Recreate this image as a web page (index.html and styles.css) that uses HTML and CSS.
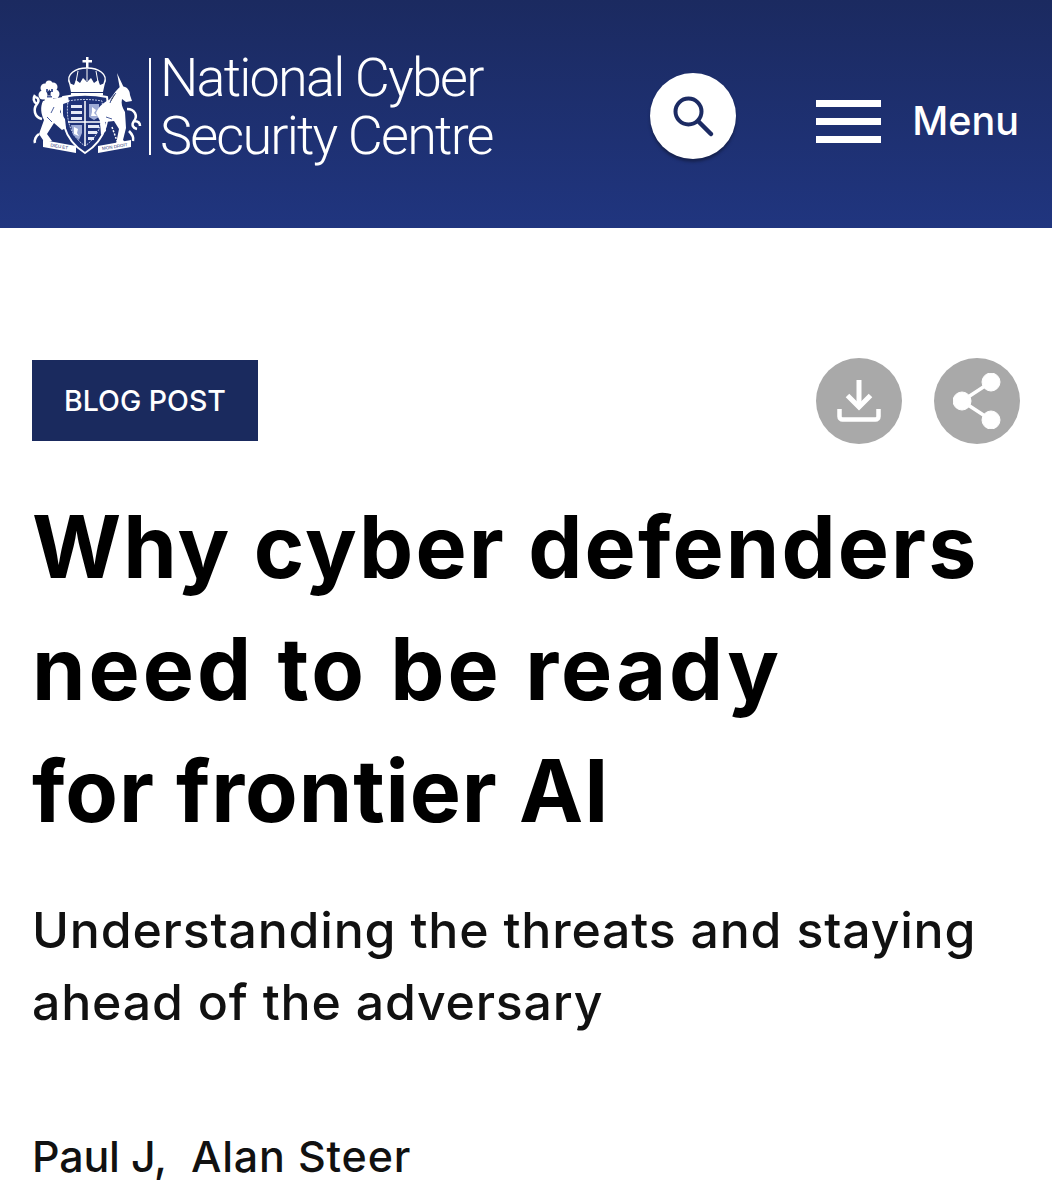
FILE: index.html
```html
<!DOCTYPE html>
<html lang="en">
<head>
    <meta charset="UTF-8">
    <meta name="viewport" content="width=device-width, initial-scale=1.0">
    <title>Why cyber defenders need to be ready for frontier AI</title>
    <link rel="stylesheet" href="styles.css">
</head>
<body>
    <header class="site-header">
        <a class="logo" href="#">
            <svg class="crest" viewBox="0 0 110 98" aria-hidden="true">
                <!-- crown -->
                <path d="M54 0h2.500v3H60v2.500h-3.500V11H54V5.500h-3.500V3H54z" fill="#fff"/>
                <path d="M38 27C33 17 44 11 55 11s22 6 17 16" fill="none" stroke="#fff" stroke-width="1.500"/>
                <path d="M55 12v12M46 14l-2 11M64 14l2 11" stroke="#fff" stroke-width="1"/>
                <path d="M39 35l-2-9 5 2 2-5 4 3 3-5 4 4 4-4 3 5 4-3 2 5 5-2-2 9z" fill="#fff"/>
                <rect x="39" y="36" width="32" height="2.500" fill="#fff"/>
                <!-- garter and shield -->
                <g transform="translate(-2 0)">
                    <path d="M33 40c14-3 30-3 44 0 3 18 1 42-22 56-23-14-25-38-22-56z" fill="#1f3278" stroke="#fff" stroke-width="2"/>
                    <path d="M38 44c11-2 23-2 34 0 2 15 0 33-17 45-17-12-19-30-17-45z" fill="none" stroke="#c3cce8" stroke-width="1" stroke-dasharray="2 1"/>
                    <path d="M55 44v45M38 65h34" stroke="#fff" stroke-width="1.500"/>
                    <path d="M41 48h11v3H41zM41 54h11v3H41zM41 60h11v3H41zM58 68h11v3H58zM58 74h9v3h-9zM58 80h6v3h-6z" fill="#e6eaf7"/>
                    <path d="M59 47h10v13l-5 3-5-3zM41 68h11v8l-3 7-6-5z" fill="#9facd6"/>
                    <path d="M62 50l4 3-2 3 3 3h-6l1-4zM44 70l4 2-1 4 2 3-5-2z" fill="#fff"/>
                </g>
                <!-- lion -->
                <circle cx="13" cy="31" r="4.500" fill="#fff"/>
                <circle cx="21" cy="30" r="4.500" fill="#fff"/>
                <circle cx="11" cy="38" r="4.500" fill="#fff"/>
                <circle cx="23" cy="37" r="4.500" fill="#fff"/>
                <circle cx="17" cy="27" r="3.500" fill="#fff"/>
                <circle cx="17" cy="43" r="4.500" fill="#fff"/>
                <path d="M14 32h2v3h-2zM19 32h2v3h-2zM15 39h5v1.500h-5z" fill="#4a5d9c"/>
                <path d="M11 44c-3 6-2 13 1 19l-5 14 6 9 7-2-5-7 7-11 8 7 4-2-1-9-5-7 3-8 6-2-1-6-11 2z" fill="#fff"/>
                <path d="M15 60l5 5M22 50l-3 6" stroke="#4a5d9c" stroke-width="1"/>
                <path d="M10 62C2 60 1 52 5 47c3-4 1-7-3-7M5 47c-4-2-4-6-2-9M7 77c-3 2-5 6-4 9" fill="none" stroke="#fff" stroke-width="2.500"/>
                <!-- unicorn -->
                <path d="M85 16l7 15-4 1z" fill="#fff"/>
                <path d="M88 30c6-2 10 3 10 8l2 6-6 1-4-3c-1 5 0 8 3 13l1 16-3 12 4 4H84l3-15-5-8-9 1 1 9-5 4-1-14-4-8c3-7 8-11 13-13 4-4 6-9 11-13z" fill="#fff"/>
                <path d="M84 36c-3 3-5 6-6 10M74 60l6 2" stroke="#4a5d9c" stroke-width="1"/>
                <path d="M95 52c8 0 11 7 7 12-3 4-1 7 3 8M102 64c4 0 6 2 6 5M97 74c3 3 5 6 4 10" fill="none" stroke="#fff" stroke-width="2.500"/>
                <path d="M80 70l5 14" stroke="#fff" stroke-width="1.500" stroke-dasharray="2 1.500"/>
                <!-- motto ribbons -->
                <path d="M11 83l33 6v7l-33-6z" fill="#fff"/>
                <path d="M66 89l33-6v7l-33 6z" fill="#fff"/>
                <text class="motto" x="27" y="91" transform="rotate(9 27 91)">DIEU ET</text>
                <text class="motto" x="83" y="91" transform="rotate(-9 83 91)">MON DROIT</text>
            </svg>
            <span class="logo-rule"></span>
            <span class="logo-name">National Cyber<br>Security Centre</span>
        </a>
        <button class="search-btn" aria-label="Search">
            <svg viewBox="0 0 44 44" width="44" height="44" fill="none" stroke="#1c2b63" aria-hidden="true">
                <circle cx="17.500" cy="17.500" r="13" stroke-width="4"/>
                <path d="M27.500 27.500L40 40" stroke-width="4.500" stroke-linecap="round"/>
            </svg>
        </button>
        <a class="menu-link" href="#">
            <span class="burger"><i></i><i></i><i></i></span>
            <span>Menu</span>
        </a>
    </header>

    <main class="article-head">
        <div class="tag-row">
            <span class="tag">BLOG POST</span>
            <div class="actions">
                <a class="round-btn" href="#" aria-label="Download">
                    <svg viewBox="0 0 44 44" width="44" height="44" fill="none" stroke="#fff" stroke-width="5" aria-hidden="true">
                        <path d="M22 1v25"/>
                        <path d="M10.500 16.500L22 28l11.500-11.500"/>
                        <path d="M2.500 30v7.500a3 3 0 0 0 3 3h33a3 3 0 0 0 3-3V30" stroke-width="4.500"/>
                    </svg>
                </a>
                <a class="round-btn" href="#" aria-label="Share">
                    <svg viewBox="0 0 48 56" width="48" height="56" fill="#fff" stroke="#fff" aria-hidden="true">
                        <circle cx="9" cy="28" r="9"/>
                        <circle cx="38" cy="9" r="9"/>
                        <circle cx="38" cy="47" r="9"/>
                        <path d="M9 28L38 9M9 28l29 19" stroke-width="3.500"/>
                    </svg>
                </a>
            </div>
        </div>
        <h1>
            <span class="line">Why cyber defenders</span>
            <span class="line line-wide">need to be ready</span>
            <span class="line line-tight">for frontier AI</span>
        </h1>
        <p class="summary">Understanding the threats and staying ahead of the adversary</p>
        <p class="authors"><span>Paul J,</span><span class="author-wide">Alan Steer</span></p>
    </main>
</body>
</html>
```

FILE: styles.css
```css
body {
    margin: 0;
    padding: 0;
    background-color: #fff;
    color: #0b0c0c;
    font-family: Inter, "Noto Sans", Arial, sans-serif;
    height: 1200px;
    overflow: hidden;
}

.site-header {
    display: flex;
    align-items: center;
    height: 228px;
    box-sizing: border-box;
    padding: 0 33px 0 32px;
    background: linear-gradient(#1b2a60, #20357f);
}
.logo {
    display: flex;
    align-items: center;
    color: #fff;
    text-decoration: none;
    margin-right: auto;
    margin-bottom: 16px;
}
.crest {
    width: 110px;
    height: 98px;
}
.motto {
    font-family: "Liberation Sans", Arial, sans-serif;
    font-size: 4.500px;
    text-anchor: middle;
    fill: #1f3278;
}
.logo-rule {
    width: 2px;
    height: 97px;
    margin: 0 9px 0 7px;
    background-color: #fff;
}
.logo-name {
    padding-top: 2px;
    font-family: Roboto, "Liberation Sans", Arial, sans-serif;
    font-weight: 300;
    font-size: 54px;
    line-height: 58px;
    letter-spacing: -1.800px;
    white-space: nowrap;
}
.search-btn {
    display: flex;
    align-items: center;
    justify-content: center;
    width: 86px;
    height: 86px;
    margin-top: 4px;
    margin-right: 80px;
    padding: 0;
    border: 0;
    border-radius: 50%;
    background-color: #fff;
    box-shadow: 0 3px 3px #16224f;
}
.menu-link {
    display: flex;
    align-items: center;
    gap: 31px;
    margin-top: 14px;
    color: #fff;
    text-decoration: none;
    font-size: 39.500px;
    font-weight: 500;
}
.burger {
    display: flex;
    flex-direction: column;
    gap: 11px;
    width: 65px;
}
.burger i {
    display: block;
    height: 7px;
    background-color: #fff;
}

.article-head {
    padding: 129px 32px 0;
}
.tag-row {
    display: flex;
    align-items: center;
    justify-content: space-between;
}
.tag {
    display: flex;
    align-items: center;
    justify-content: center;
    width: 226px;
    height: 81px;
    background-color: #1a2a5e;
    color: #fff;
    font-size: 28.500px;
    font-weight: 500;
}
.actions {
    display: flex;
    gap: 32px;
    margin-top: 1px;
}
.round-btn {
    display: flex;
    align-items: center;
    justify-content: center;
    width: 86px;
    height: 86px;
    border-radius: 50%;
    background-color: #a9a9a9;
}
h1 {
    margin: 42px 0 0;
    font-size: 86px;
    font-weight: 700;
    line-height: 122px;
    letter-spacing: 2.100px;
    color: #000;
}
h1 .line {
    display: block;
}
h1 .line-wide {
    letter-spacing: 3px;
}
h1 .line-tight {
    letter-spacing: 0.900px;
}
.summary {
    margin: 42px 0 0;
    font-size: 50px;
    font-weight: 500;
    line-height: 72px;
    letter-spacing: 0.800px;
    color: #111;
}
.authors {
    display: flex;
    gap: 24px;
    margin: 90px 0 0;
    font-size: 43px;
    font-weight: 500;
    line-height: 56px;
    letter-spacing: -0.200px;
    color: #111;
}
.author-wide {
    letter-spacing: 0.800px;
}
```
